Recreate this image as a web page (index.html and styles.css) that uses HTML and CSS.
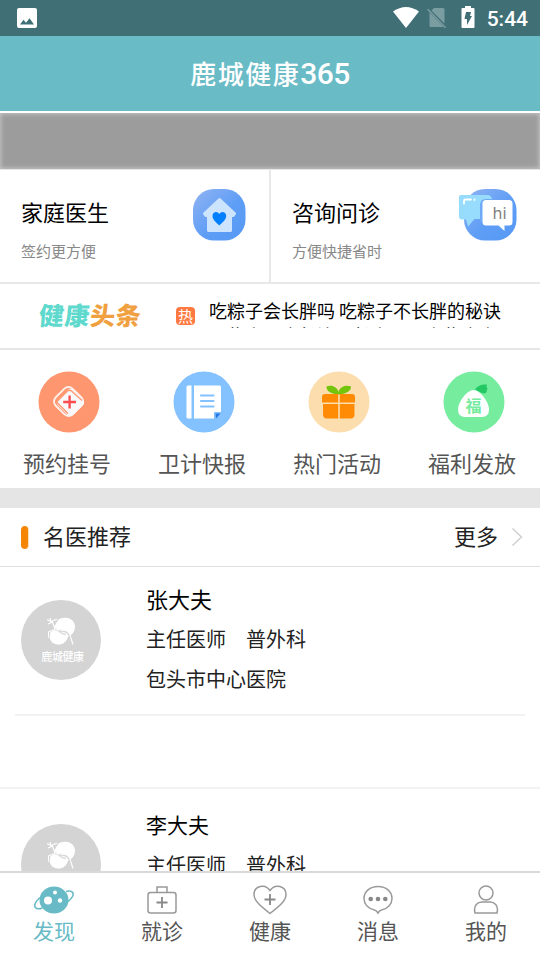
FILE: index.html
```html
<!DOCTYPE html>
<html lang="zh-CN">
<head>
<meta charset="utf-8">
<title>鹿城健康365</title>
<link rel="stylesheet" href="styles.css">
</head>
<body>
<div class="status">
  <svg class="status-photo" width="20" height="20" viewBox="0 0 20 20"><path fill="#fff" fill-rule="evenodd" d="M2 0h16a2 2 0 0 1 2 2v16a2 2 0 0 1-2 2H2a2 2 0 0 1-2-2V2a2 2 0 0 1 2-2zM3 16.500h14l-4.500-6.200-3.500 4.500-2.500-3z"/></svg>
  <svg class="status-wifi" width="26" height="21" viewBox="0 0 26 21"><path fill="#fff" d="M0 4.500Q13-4.500 26 4.500L13 21z"/></svg>
  <svg class="status-sim" width="20" height="22" viewBox="0 0 20 22"><path fill="#7a9da2" d="M7 1h9a1.500 1.500 0 0 1 1.500 1.500v14L4.500 3.500zM2.500 5.500 16.500 20H4a1.500 1.500 0 0 1-1.500-1.500z"/><path stroke="#7a9da2" stroke-width="1.500" d="M.7 2.200 18.500 20.800"/></svg>
  <svg class="status-battery" width="14" height="22" viewBox="0 0 14 22"><path fill="#fff" fill-rule="evenodd" d="M4 0h6v2h2.500q1 0 1 1v18q0 1-1 1h-11q-1 0-1-1V3q0-1 1-1H4zM5 6h5L9 10h2L6 19V13H3.500z"/></svg>
  <span class="status-time">5:44</span>
</div>
<header class="header"><h1 class="brand">鹿城健康<span class="brand-num">365</span></h1></header>
<div class="banner"><div class="banner-fill"></div></div>
<section class="services">
  <div class="service">
    <div><h2 class="service-name">家庭医生</h2><p class="service-note">签约更方便</p></div>
    <svg class="service-icon" width="60" height="54" viewBox="0 0 60 54">
      <defs><linearGradient id="blue" x1="0" y1="0" x2="1" y2="1"><stop offset="0" stop-color="#91b3f2"/><stop offset=".55" stop-color="#5f9ef6"/><stop offset="1" stop-color="#5598f4"/></linearGradient></defs>
      <rect x="4" y="1" width="52.500" height="51.500" rx="21" fill="url(#blue)"/>
      <path fill="#cce4fe" stroke="#cce4fe" stroke-width="3" stroke-linejoin="round" d="M30.500 11.500 45.500 25.500 44 27.500H41.500V42.500H19.500V27.500H17L15.500 25.500z"/>
      <path fill="#0080ff" d="M30.300 37.500C27 34.500 23.500 31.500 23.500 28c0-4.500 5-5.500 6.800-2 1.800-3.500 6.900-2.500 6.900 2 0 3.500-3.600 6.500-6.900 9.500z"/>
    </svg>
  </div>
  <div class="service service-second">
    <div><h2 class="service-name">咨询问诊</h2><p class="service-note">方便快捷省时</p></div>
    <svg class="service-icon" width="60" height="54" viewBox="0 0 60 54">
      <rect x="5" y="1" width="52.500" height="51.500" rx="21" fill="url(#blue)"/>
      <path fill="#98dcfd" d="M2 7h26q5 0 5 5v14q0 5-5 5H15.500L9 38.500 7 31.500H3q-3 0-3-3V9q0-2 2-2z"/>
      <path fill="#6eaaf5" d="M27 11h7v22.500h-13V17q0-6 6-6z"/>
      <path fill="none" stroke="#fff" stroke-width="1.800" stroke-linecap="round" d="M5 15.500V13q0-1.500 1.500-1.500H12M15.500 11.500v.5"/>
      <path fill="#fff" d="M27 12h23q3.500 0 3.500 3.500V34q0 3.500-3.500 3.500h-4.500v5.500l-6-5.500H27q-3.500 0-3.500-3.500V15.500q0-3.500 3.500-3.500z"/>
      <text class="hi" x="33.500" y="30.500">hi</text>
    </svg>
  </div>
</section>
<section class="news">
  <div class="news-logo">健康<span class="news-logo-end">头条</span></div>
  <span class="hot">热</span>
  <div class="ticker"><p>吃粽子会长胖吗 吃粽子不长胖的秘诀</p><p>一些方一会长治一长方一一方些许方</p></div>
</section>
<section class="menu">
  <div class="menu-item">
    <svg width="62" height="62" viewBox="0 0 62 62"><circle cx="31" cy="31" r="30.500" fill="#fe976f"/>
      <rect x="18.500" y="18.500" width="24" height="24" rx="6" transform="rotate(45 30.500 30.500)" fill="none" stroke="#fff0eb" stroke-width="1.800"/>
      <rect x="21.500" y="21" width="21.500" height="21.500" rx="4" transform="rotate(45 32.500 32)" fill="#f9f8fb"/>
      <path fill="none" stroke="#fe976f" stroke-width="1.300" d="M18.500 31 29.500 20Q31.500 18.500 33.500 20L44 29.500M18.500 31 30 42.500"/>
      <path stroke="#fb4e52" stroke-width="2.400" d="M25.200 31h12.800M31.600 24.600v12.800"/></svg>
    <span>预约挂号</span>
  </div>
  <div class="menu-item">
    <svg width="62" height="62" viewBox="0 0 62 62"><circle cx="31" cy="31" r="30.500" fill="#84c1ff"/>
      <path fill="#fff" d="M15 14.500h3.500v33H15q-1.500 0-1.500-1.500V16q0-1.500 1.500-1.500zM21 14.500h25.500q1.500 0 1.500 1.500v25h-7v6.500H21z"/>
      <path fill="none" stroke="#84c1ff" stroke-width="2.200" stroke-linecap="round" d="M28 24.500h12.500M28 30h12.500M28 35.500h12.500"/>
      <path fill="#2676e2" d="M42.500 42.500h5L43 47.500z"/></svg>
    <span>卫计快报</span>
  </div>
  <div class="menu-item">
    <svg width="62" height="62" viewBox="0 0 62 62"><circle cx="31" cy="31" r="30.500" fill="#fcdeae"/>
      <path fill="#73c40b" d="M30.500 23.500C22 23 18 19 18.500 15.500 24 13.500 29 16 30.500 21 32 16 37 13.500 43 15.500 43.500 19 39 23 30.500 23.500z"/>
      <path fill="#ff8b05" d="M17 23h13.200v8.500H14V26q0-3 3-3zm14.800 0H44q3 0 3 3v5.500H31.800zM15 33h15.200v14.500H19q-4 0-4-4zm16.800 0H46.500v10.500q0 4-4 4H31.800z"/></svg>
    <span>热门活动</span>
  </div>
  <div class="menu-item">
    <svg width="62" height="62" viewBox="0 0 62 62"><circle cx="31" cy="31" r="30.500" fill="#75ec9e"/>
      <path fill="#23c763" d="M32 18.500C35 14 39 13 44 13.500q-1 2 .5 4-1 3-1.500 4.500-4 1-6-1z"/>
      <path fill="#fff" d="M30.500 19C37 19 46 31 46 38.500q0 7.500-7 7.500h-17q-7 0-7-7.500C15 31 24 19 30.500 19z"/>
      <text class="fu" x="22.500" y="40.800">福</text></svg>
    <span>福利发放</span>
  </div>
</section>
<section class="section-head">
  <i class="marker"></i><h2 class="section-title">名医推荐</h2><span class="more">更多</span>
  <svg width="12" height="20" viewBox="0 0 12 20"><path d="M1.500 1.500 10.500 10 1.500 18.500" fill="none" stroke="#ccc" stroke-width="1.300"/></svg>
</section>
<main class="doctors">
  <article class="doctor">
    <div class="avatar">
      <svg width="32" height="32" viewBox="0 0 32 32">
        <path fill="#fff" d="M13 4C18 0 29 1 30 10c0 6-3 9-7 11-2 6-7 9-13 7-7-3-7-11-2-15z"/>
        <path class="deer-gap" d="M7.500 7 9 13q5 2 10 2 5 1 6 6l2 5M9 13l-5 3v5M13 15q3 3 8 4"/>
        <path class="deer" d="M2 3.500 6 5.500 5 2m1.500 3.500L12 3M3 8l4.500-2L10 13q5 1 10 1.500c5 1 5 5 6 8l2 6M9.500 13.500 3.500 16v5.500M12 14.500q3 4 9 5"/>
      </svg>
      <span>鹿城健康</span>
    </div>
    <div class="doctor-info"><h3>张大夫</h3><p>主任医师　普外科</p><p>包头市中心医院</p></div>
  </article>
  <div class="divider"></div>
  <article class="doctor doctor-next">
    <div class="avatar">
      <svg width="32" height="32" viewBox="0 0 32 32">
        <path fill="#fff" d="M13 4C18 0 29 1 30 10c0 6-3 9-7 11-2 6-7 9-13 7-7-3-7-11-2-15z"/>
        <path class="deer-gap" d="M7.500 7 9 13q5 2 10 2 5 1 6 6l2 5M9 13l-5 3v5M13 15q3 3 8 4"/>
        <path class="deer" d="M2 3.500 6 5.500 5 2m1.500 3.500L12 3M3 8l4.500-2L10 13q5 1 10 1.500c5 1 5 5 6 8l2 6M9.500 13.500 3.500 16v5.500M12 14.500q3 4 9 5"/>
      </svg>
    </div>
    <div class="doctor-info"><h3>李大夫</h3><p>主任医师　普外科</p></div>
  </article>
</main>
<nav class="tabs">
  <div class="tab tab-active">
    <svg width="40" height="30" viewBox="0 0 40 30"><ellipse cx="20" cy="15" rx="14.500" ry="13.500" fill="#68bbc6"/><path d="M32 6.500C37.500 5 40.500 7.500 38.500 11.500c-1 2-2.500 3.500-4.500 5M6 12.500C1.500 16.500-.5 20.500 1.500 22.500c1 1.500 4 1.500 7 .5" class="ring"/><g fill="#fff"><circle cx="21" cy="7.500" r="2"/><circle cx="14" cy="15.500" r="4"/><circle cx="26" cy="15.500" r="2.200"/></g></svg>
    <span>发现</span>
  </div>
  <div class="tab">
    <svg width="30" height="30" viewBox="0 0 30 30"><rect x="1" y="7.500" width="28" height="20.500" rx="2.500"/><path d="M10 7V2h10v5"/><path class="plus" d="M9.500 17.500h11M15 12v11"/></svg>
    <span>就诊</span>
  </div>
  <div class="tab">
    <svg width="34" height="30" viewBox="0 0 34 30"><path d="M17 28.500C8 21.500 1 16 1 9.500 1 1 12-2 17 5.500 22-2 33 1 33 9.500 33 16 26 21.500 17 28.500z"/><path class="plus" d="M11.500 14.500h11M17 9v11"/></svg>
    <span>健康</span>
  </div>
  <div class="tab">
    <svg width="30" height="30" viewBox="0 0 30 30"><path d="M11.500 25C5 23.500 1 19 1 13.500 1 6.500 7 1.500 15 1.500s14 5 14 12c0 5.500-4 10-10.500 11.500-1.500.3-2.200 1-3.500 3-1.300-2-2-2.700-3.500-3z"/><g class="dots"><circle cx="7.700" cy="14" r="2.300"/><circle cx="15" cy="14" r="2.300"/><circle cx="22.300" cy="14" r="2.300"/></g></svg>
    <span>消息</span>
  </div>
  <div class="tab">
    <svg width="26" height="30" viewBox="0 0 26 30"><circle cx="13" cy="8" r="7"/><path d="M2 28C0 20 5 17 9 17h8c4 0 9 3 7 11z"/></svg>
    <span>我的</span>
  </div>
</nav>
</body>
</html>
```
FILE: styles.css
```css
* { box-sizing: border-box; margin: 0; padding: 0; }
body {
  width: 540px; height: 960px; overflow: hidden;
  display: flex; flex-direction: column;
  background: #fff; color: #000;
  font-family: "Noto Sans CJK SC", sans-serif;
}
h1, h2, h3 { font-weight: 400; }
svg { display: block; flex: none; }
body > * { flex: none; }

.status { height: 36px; background: #406f76; display: flex; padding: 0 12px 0 17px; color: #fff; }
.status-photo { margin-top: 8px; }
.status-wifi { margin: 7px 0 0 356px; }
.status-sim { margin: 7px 0 0 8px; }
.status-battery { margin: 6px 0 0 14px; }
.status-time { margin-left: auto; font: 500 21px/38px Roboto, sans-serif; }

.header { height: 75px; background: #69bbc6; display: flex; justify-content: center; }
.brand { color: #fff; font-size: 26px; line-height: 73px; font-weight: 500; letter-spacing: 1.5px; white-space: nowrap; }
.brand-num { font-family: Roboto, sans-serif; font-size: 30px; letter-spacing: -.5px; }

.banner { height: 59px; padding-top: 2px; border-bottom: 1px solid #e6e6e6; }
.banner-fill { height: 56px; background: #9c9c9c; box-shadow: inset 0 0 4px 1px #c4c4c4; }

.services { height: 114px; display: flex; border-bottom: 2px solid #e8e8e8; }
.service { width: 269px; display: flex; justify-content: space-between; padding: 18px 20px 0 21px; }
.service-second { width: 271px; border-left: 2px solid #e8e8e8; padding-right: 21px; }
.service-name { font-size: 22px; line-height: 32px; margin-top: 7px; }
.service-note { font-size: 15px; line-height: 22px; margin-top: 13px; color: #888; }
.hi { font: 16px "Noto Sans", sans-serif; fill: #808080; }

.news { height: 66px; display: flex; border-bottom: 2px solid #e6e6e6; padding-left: 39px; }
.news-logo { width: 137px; font-size: 25px; line-height: 60px; font-weight: 900; color: #5fd9cd; transform: skewX(-5deg); white-space: nowrap; letter-spacing: .6px; }
.news-logo-end { color: #f0a03e; }
.hot { width: 19px; height: 18px; margin-top: 23px; border-radius: 4px; background: #ff7940; color: #fff; font-size: 15px; line-height: 17px; text-align: center; }
.ticker { margin: 14px 0 0 14px; height: 30px; overflow: hidden; font-size: 18px; line-height: 25px; white-space: nowrap; }

.menu { height: 158px; display: grid; grid-template-columns: repeat(4, 135px); border-bottom: 20px solid #e5e5e5; }
.menu-item { display: flex; flex-direction: column; align-items: center; padding: 21px 1px 0 0; font-size: 22px; line-height: 32px; color: #555; }
.menu-item span { margin: 13px 0 0; }
.menu-item svg { margin-left: 4px; }
.fu { font-size: 16px; font-weight: 700; fill: #75ec9e; }

.section-head { height: 59px; display: flex; align-items: center; border-bottom: 1px solid #e0e0e0; padding: 0 17px 0 21px; color: #222; font-size: 22px; line-height: 32px; }
.marker { width: 8px; height: 23px; border: solid #fde0bd; border-width: 0 1px 0 0; border-radius: 4px; background: #f58505; margin-right: 14px; }
.section-title { font-size: 22px; margin-bottom: 4px; }
.more { margin: 0 13px 4px auto; }

.doctors { height: 304px; overflow: hidden; }
.doctor { height: 147px; display: flex; padding-left: 21px; }
.avatar { width: 80px; height: 80px; margin-top: 33px; border-radius: 50%; background: #d4d4d4; display: flex; flex-direction: column; align-items: center; padding-top: 16px; color: #fff; font-size: 11px; font-weight: 500; line-height: 15px; letter-spacing: -.4px; }
.avatar span { margin: 1px 0 0 3px; }
.deer, .deer-gap { fill: none; stroke: #fff; stroke-width: 1.1; stroke-linejoin: round; }
.deer-gap { stroke: #d4d4d4; stroke-width: 2.2; }
.doctor-info { margin: 15px 0 0 45px; }
.doctor-info h3 { font-size: 22px; line-height: 32px; margin-bottom: 5px; }
.doctor-info p { font-size: 20px; line-height: 40px; color: #222; }
.divider { height: 2px; margin: 0 15px 71px; background: #f2f2f2; }
.doctor-next { height: 220px; border-top: 2px solid #f2f2f2; }
.doctor-next .avatar { margin-top: 35px; }
.doctor-next .doctor-info { margin-top: 19px; }
.doctor-next h3 { font-size: 21px; }

.tabs { height: 89px; border-top: 2px solid #d9d9d9; display: grid; grid-template-columns: repeat(5, 1fr); background: #fff; }
.tab { display: flex; flex-direction: column; align-items: center; padding-top: 12px; font-size: 21px; line-height: 32px; color: #555; }
.tab span { margin-top: -1px; }
.tab svg { fill: none; stroke: #999; stroke-width: 1.5; }
.tab .plus { stroke: #888; stroke-width: 1.8; }
.tab-active { color: #68bbc6; }
.tab-active svg { stroke: none; }
.ring { fill: none; stroke: #68bbc6; stroke-width: 1.6; }
.dots { fill: #888; stroke: none; }
```
